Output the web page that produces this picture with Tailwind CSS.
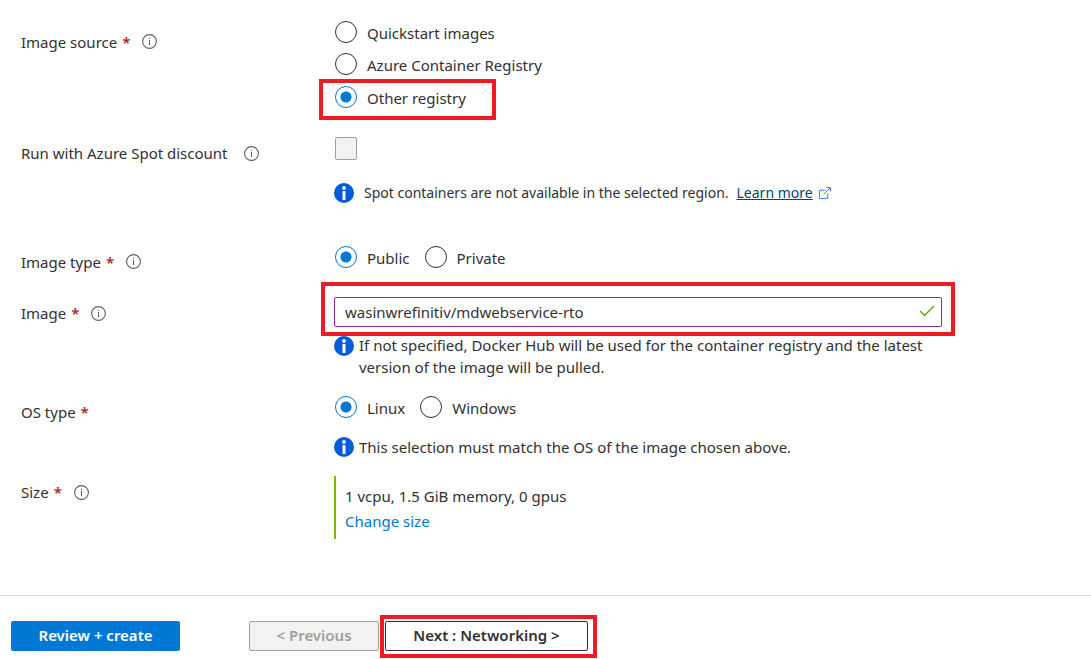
<!DOCTYPE html>
<html lang="en">
<head>
<meta charset="utf-8">
<meta name="viewport" content="width=device-width, initial-scale=1">
<title>Create container instance</title>
<script src="https://cdn.jsdelivr.net/npm/@tailwindcss/browser@4"></script>
</head>
<body class="bg-white font-['Noto_Sans','Open_Sans',sans-serif] text-[15px] leading-5 text-[#323130]">
<svg class="hidden" aria-hidden="true">
  <symbol id="hint" viewBox="0 0 15 15"><circle cx="7.5" cy="7.5" r="6.9" fill="none" stroke="#605e5c" stroke-width="1.1"/><path d="M7.5 6v5M7.5 3.8v1.1" stroke="#605e5c" stroke-width="1"/></symbol>
  <symbol id="info" viewBox="0 0 20 20"><circle cx="10" cy="10" r="10" fill="#015cda"/><rect x="8.5" y="8" width="3" height="9" fill="#fff"/><circle cx="10" cy="5" r="1.9" fill="#fff"/></symbol>
</svg>
<main>
  <form>
    <div class="pt-[21px] pl-[21px]">
      <fieldset class="grid grid-cols-[313px_1fr]" aria-labelledby="l-source">
        <div class="flex items-start pt-[11px]"><span id="l-source">Image source</span><span class="ml-[5px] font-semibold text-[#a4262c]">*</span><svg class="mt-0.5 ml-3 size-[15px]"><use href="#hint"/></svg></div>
        <div class="flex flex-col items-start gap-2.5 pl-px">
          <label class="flex h-[22px] items-center gap-2.5"><input type="radio" name="source" class="size-[22px] appearance-none rounded-full border border-[#323130]"><span class="pt-0.5">Quickstart images</span></label>
          <label class="flex h-[22px] items-center gap-2.5"><input type="radio" name="source" class="size-[22px] appearance-none rounded-full border border-[#323130]"><span class="pt-0.5">Azure Container Registry</span></label>
          <div class="relative pt-px">
            <label class="flex h-[22px] items-center gap-2.5"><input type="radio" name="source" checked class="size-[22px] appearance-none rounded-full border border-[#0078d4] bg-[radial-gradient(circle,#0078d4_5px,transparent_6px)]"><span class="pt-0.5">Other registry</span></label>
            <div class="pointer-events-none absolute -top-1.5 -left-4 h-[41px] w-[177px] border-4 border-[#ed1c24]"></div>
          </div>
        </div>
      </fieldset>

      <div class="mt-[29px] grid grid-cols-[313px_1fr]">
        <div class="flex items-start pt-1.5"><label for="spot">Run with Azure Spot discount</label><svg class="mt-[3px] ml-4 size-[15px]"><use href="#hint"/></svg></div>
        <div>
          <input id="spot" type="checkbox" disabled class="ml-px block h-[23px] w-[22px] appearance-none rounded-xs border border-[#a19f9d] bg-[#f3f2f1]">
          <div class="mt-[22px] flex items-center text-[14px] leading-[22px]"><svg class="size-5"><use href="#info"/></svg><span class="ml-2.5">Spot containers are not available in the selected region.</span><a href="#" class="ml-2 text-[#004578] underline">Learn more</a>
            <svg class="ml-1.5 size-3" viewBox="0 0 13 13" fill="none" stroke="#2f7fe0"><path d="M7 3.500H.5v9h9V7M5 8l7-7M8 .5h4.500v4.500"/></svg>
          </div>
        </div>
      </div>

      <fieldset class="mt-[42px] grid grid-cols-[313px_1fr]" aria-labelledby="l-type">
        <div class="flex items-start pt-1.5"><span id="l-type">Image type</span><span class="ml-[5px] font-semibold text-[#a4262c]">*</span><svg class="mt-0.5 ml-3 size-[15px]"><use href="#hint"/></svg></div>
        <div class="flex items-start gap-[15px] pl-px">
          <label class="flex h-[22px] items-center gap-2.5"><input type="radio" name="type" checked class="size-[22px] appearance-none rounded-full border border-[#0078d4] bg-[radial-gradient(circle,#0078d4_5px,transparent_6px)]"><span class="pt-0.5">Public</span></label>
          <label class="flex h-[22px] items-center gap-2.5"><input type="radio" name="type" class="size-[22px] appearance-none rounded-full border border-[#323130]"><span class="pt-0.5">Private</span></label>
        </div>
      </fieldset>

      <div class="mt-[25px] grid grid-cols-[313px_1fr]">
        <div class="flex items-start pt-1.5"><label for="image">Image</label><span class="ml-[5px] font-semibold text-[#a4262c]">*</span><svg class="mt-[3px] ml-3 size-[15px]"><use href="#hint"/></svg></div>
        <div class="max-w-[608px]">
          <div class="relative">
            <input id="image" type="text" value="wasinwrefinitiv/mdwebservice-rto" class="block h-[30px] w-full rounded-xs border border-[#8a2da5] pr-9 pl-2.5">
            <svg class="absolute top-2 right-[7px] h-3 w-4" viewBox="0 0 16 12" fill="none" stroke="#57a300" stroke-width="1.300"><path d="M1 6l4.500 4.500L15 1"/></svg>
            <div class="pointer-events-none absolute -top-[15px] -right-[13px] -bottom-[9px] -left-[13px] border-4 border-[#ed1c24]"></div>
          </div>
          <div class="mt-[7px] flex items-start gap-[5px] leading-[22px]"><svg class="mt-0.5 size-5 shrink-0"><use href="#info"/></svg><p>If not specified, Docker Hub will be used for the container registry and the latest version of the image will be pulled.</p></div>
        </div>
      </div>

      <fieldset class="mt-[18px] grid grid-cols-[313px_1fr]" aria-labelledby="l-os">
        <div class="flex items-start pt-1.5"><span id="l-os">OS type</span><span class="ml-[5px] font-semibold text-[#a4262c]">*</span></div>
        <div>
          <div class="flex items-start gap-[15px] pl-px">
            <label class="flex h-[22px] items-center gap-2.5"><input type="radio" name="os" checked class="size-[22px] appearance-none rounded-full border border-[#0078d4] bg-[radial-gradient(circle,#0078d4_5px,transparent_6px)]"><span class="pt-0.5">Linux</span></label>
            <label class="flex h-[22px] items-center gap-2.5"><input type="radio" name="os" class="size-[22px] appearance-none rounded-full border border-[#323130]"><span class="pt-0.5">Windows</span></label>
          </div>
          <div class="mt-[18px] flex items-start gap-[5px] leading-[22px]"><svg class="mt-px size-5 shrink-0"><use href="#info"/></svg><p>This selection must match the OS of the image chosen above.</p></div>
        </div>
      </fieldset>

      <div class="mt-[18px] grid grid-cols-[313px_1fr]">
        <div class="flex items-start pt-1.5"><span>Size</span><span class="ml-[5px] font-semibold text-[#a4262c]">*</span><svg class="mt-[3px] ml-3 size-[15px]"><use href="#hint"/></svg></div>
        <div class="border-l-2 border-[#7fba00] pt-2 pb-[5px] pl-[9px] leading-[25px]">
          <p>1 vcpu, 1.5 GiB memory, 0 gpus</p>
          <a href="#" class="block text-[#0078d4]">Change size</a>
        </div>
      </div>
    </div>

    <footer class="mt-14 flex border-t border-[#dddddd] pt-[25px] pb-2 pl-[11px] font-semibold">
      <button type="button" class="h-[30px] w-[169px] rounded-xs bg-[#0078d4] pb-0.5 text-white">Review + create</button>
      <button type="button" disabled class="ml-[69px] h-[30px] w-[130px] rounded-xs border border-[#a19f9d] bg-[#f3f2f1] pb-0.5 text-[#a19f9d]">&lt; Previous</button>
      <div class="relative ml-1.5">
        <button type="button" class="block h-[30px] w-[203px] rounded-xs border border-[#323130] bg-white pb-0.5">Next : Networking &gt;</button>
        <div class="pointer-events-none absolute -top-1.5 -right-[9px] -bottom-[7px] -left-[5px] border-4 border-[#ed1c24]"></div>
      </div>
    </footer>
  </form>
</main>
</body>
</html>
